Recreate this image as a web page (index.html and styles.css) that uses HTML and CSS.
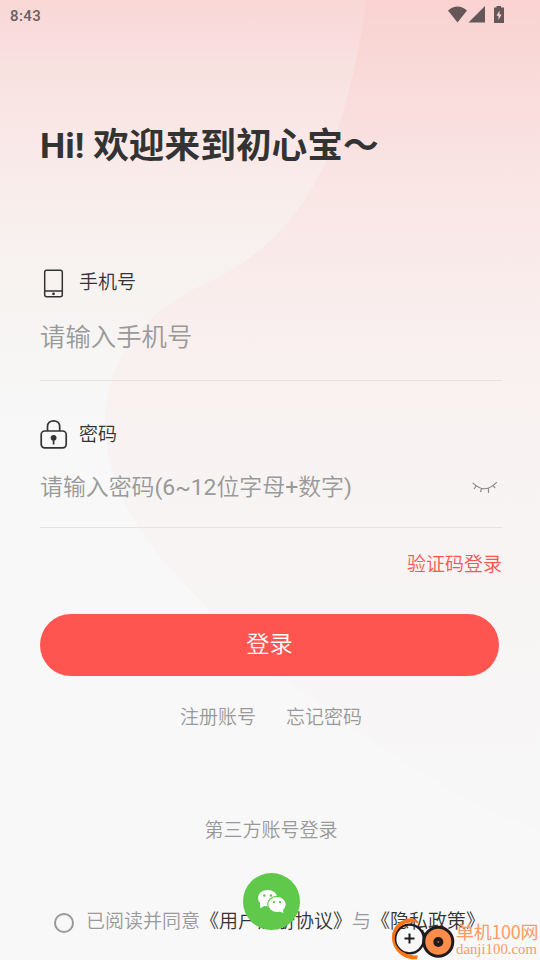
FILE: index.html
```html
<!DOCTYPE html>
<html lang="zh-CN">
<head>
<meta charset="utf-8">
<title>登录</title>
<link rel="stylesheet" href="styles.css">
</head>
<body>
<div class="screen">
  <svg class="backdrop" viewBox="0 0 540 960" aria-hidden="true">
    <defs>
      <linearGradient id="blob" gradientUnits="userSpaceOnUse" x1="0" y1="0" x2="0" y2="860">
        <stop offset="0" stop-color="#fad2d1"/>
        <stop offset=".05" stop-color="#f8d7d5"/>
        <stop offset=".12" stop-color="#fadddd"/>
        <stop offset=".22" stop-color="#f9e6e5"/>
        <stop offset=".36" stop-color="#f9eeed"/>
        <stop offset=".5" stop-color="#f8f3f2"/>
        <stop offset=".7" stop-color="#f7f5f4"/>
        <stop offset="1" stop-color="#f8f7f8"/>
      </linearGradient>
    </defs>
    <path fill="url(#blob)" d="M366 0C360 50 347 112 324 165C301 214 270 249 221 276C185 292 153 311 138 334C117 356 105 390 105 422C106 470 123 508 155 551C196 600 245 645 296 686C365 739 440 793 540 832V0Z"/>
  </svg>

  <header class="status">
    <span>8:43</span>
    <svg class="status-icons" viewBox="0 0 58 18" fill="#655757">
      <path d="M0 4.500Q9.500-3.500 19 4.500L9.500 16.500Z"/>
      <path d="M20.500 16.500L37 0V16.500Z"/>
      <path d="M46 1.500H48.500V0H53V1.500H56V17H46Z"/>
      <path fill="#f8d5d3" d="M51.500 4.500L48.500 9.800H50.500V14L53.500 8.500H51.500Z"/>
    </svg>
  </header>

  <main class="content">
    <h1>Hi! 欢迎来到初心宝～</h1>

    <section class="field phone">
      <div class="label">
        <svg class="icon" viewBox="0 0 28 32" fill="none" stroke="#333" stroke-width="1.500">
          <rect x="4.700" y="2.300" width="17.600" height="26.400" rx="2"/>
          <path d="M4.700 23H22.300"/>
          <circle cx="13.500" cy="25.800" r="1.400" fill="#333" stroke="none"/>
        </svg>
        <span>手机号</span>
      </div>
      <div class="entry">请输入手机号</div>
    </section>

    <section class="field password">
      <div class="label">
        <svg class="icon" viewBox="0 1 28 32" fill="none" stroke="#333" stroke-width="1.700">
          <rect x="1.200" y="13" width="25" height="16.800" rx="3.500"/>
          <path d="M7.500 13V8.500C7.500 0.900 19.700 0.900 19.700 8.500V13"/>
          <circle cx="13.600" cy="19.800" r="2.900" fill="#333" stroke="none"/>
          <path d="M13.600 20V26.500"/>
        </svg>
        <span>密码</span>
      </div>
      <div class="entry">
        <span>请输入密码<i>(6~12</i>位字母<i>+</i>数字<i>)</i></span>
        <svg class="eye" viewBox="0 0 26 14" fill="none" stroke="#8c8989" stroke-width="1.200">
          <path d="M.8 1.800Q12.800 14 24.800 1.200M4.200 5L2 8M9.500 7.600L8.500 11.200M16.500 7.600V12M21 4.700L23.200 7"/>
        </svg>
      </div>
    </section>

    <a class="code-login">验证码登录</a>
    <div class="submit">登录</div>
    <nav class="links"><a>注册账号</a><a>忘记密码</a></nav>
    <p class="third">第三方账号登录</p>
    <div class="agreement">
      <span class="radio"></span>
      <p>已阅读并同意<b>《用户注册协议》</b>与<b>《隐私政策》</b></p>
    </div>
  </main>

  <svg class="wechat" viewBox="0 0 57 57">
    <circle cx="28.500" cy="28.500" r="28.500" fill="#60c84b"/>
    <g fill="#fff">
      <ellipse cx="24.600" cy="25.200" rx="9.700" ry="8.300"/>
      <path d="M17 30L17.200 35.300L23 32Z"/>
      <ellipse cx="34" cy="31.500" rx="9.300" ry="8.100" stroke="#60c84b" stroke-width="1.200"/>
      <path d="M36 38L40.300 40L40 35Z"/>
    </g>
    <g fill="#60c84b">
      <circle cx="21.300" cy="22.500" r="1.300"/><circle cx="28" cy="22.500" r="1.300"/>
      <circle cx="31" cy="29.200" r="1.100"/><circle cx="37" cy="29.200" r="1.100"/>
    </g>
  </svg>

  <aside class="watermark">
    <svg viewBox="0 0 64 42" fill="none">
      <circle cx="18.500" cy="21" r="14.300" stroke="#211b1d" stroke-width="2.300"/>
      <path d="M20 .3C8 1 0 11 1 21C2 33 14 43 26 41L27 37.500C15 38 4 31 3.700 21C3.500 13 10 5 20 4.500Q24 4 28 5Q26 1 20 .3Z" fill="#ff7412"/>
      <path d="M13.500 20.500H23.500M18.500 15.500V25.500" stroke="#211b1d" stroke-width="2"/>
      <path d="M31 12Q32 18 37 15M34.500 18L40 11.500" stroke="#211b1d" stroke-width="2.300"/>
      <circle cx="47.300" cy="23.700" r="14.500" fill="#ff8c48" stroke="#211b1d" stroke-width="3"/>
      <circle cx="47.300" cy="24" r="5" fill="#211b1d"/>
      <circle cx="47.300" cy="24" r=".8" fill="#ff8c48"/>
    </svg>
    <div class="mark-text"><span>单机100网</span><span class="domain">danji100.com</span></div>
  </aside>
</div>
</body>
</html>
```

FILE: styles.css
```css
* { box-sizing: border-box; }
body, h1, p { margin: 0; }
body {
  width: 540px;
  height: 960px;
  overflow: hidden;
  font-family: Roboto, "Noto Sans CJK SC", sans-serif;
  font-size: 19px;
  font-weight: 350;
  color: #333;
}
.screen {
  position: relative;
  height: 960px;
  background: linear-gradient(#f9d8d5 0, #fadcde 40px, #f8e2e0 70px, #f9e7e6 125px, #f9edeb 190px, #f7f2f0 270px, #f7f5f4 340px, #f8f8f8 430px);
}
.backdrop { position: absolute; inset: 0; width: 540px; height: 960px; }
.status {
  position: relative;
  display: flex;
  justify-content: space-between;
  height: 32px;
  padding: 6px 34px 0 10px;
  font-size: 15px;
  font-weight: 500;
  line-height: 20px;
  letter-spacing: .4px;
  color: #6b5d5d;
}
.status-icons { width: 58px; height: 18px; }
.content {
  position: relative;
  display: flex;
  flex-direction: column;
  padding: 86px 38px 0 40px;
}
h1 { height: 56px; font-size: 35.700px; line-height: 56px; white-space: nowrap; }
.field { border-bottom: 1px solid #e6e2e2; }
.phone { height: 113px; margin-top: 94px; }
.password { height: 109px; margin-top: 38px; }
.label { display: flex; align-items: center; height: 32px; gap: 11px; }
.label span { line-height: 28px; margin-bottom: 3px; }
.icon { width: 28px; height: 32px; }
.entry {
  display: flex;
  align-items: center;
  justify-content: space-between;
  color: #999;
}
.entry i { font-style: normal; font-weight: 400; }
.phone .entry { height: 38px; margin-top: 16px; font-size: 25.400px; }
.password .entry { height: 36px; margin-top: 16px; padding-right: 4px; font-size: 22.900px; }
.password .label span { margin-bottom: 1px; }
.eye { width: 26px; height: 14px; margin-top: 6px; }
.code-login { align-self: flex-end; margin-top: 23px; line-height: 28px; color: #ff5550; }
.submit {
  width: 459px;
  height: 62px;
  margin-top: 35px;
  border-radius: 31px;
  background: #ff5550;
  color: #fff;
  font-size: 23.200px;
  line-height: 61px;
  text-align: center;
}
.links { display: flex; justify-content: center; gap: 30px; margin-top: 28px; line-height: 28px; color: #999; }
.third { margin-top: 85px; line-height: 28px; text-align: center; color: #999; }
.agreement { display: flex; align-items: center; gap: 12px; margin: 63px 0 0 14px; color: #999; white-space: nowrap; line-height: 28px; }
.agreement b { color: #333; font-weight: 350; }
.radio { width: 20px; height: 20px; margin-top: 1px; border: 2px solid #999; border-radius: 50%; }
.wechat { position: absolute; left: 243px; top: 873px; width: 57px; height: 57px; }
.watermark { position: absolute; left: 391px; top: 918px; display: flex; gap: 1px; font-weight: 400; color: #ff9a61; }
.watermark svg { width: 64px; height: 42px; }
.mark-text { display: flex; flex-direction: column; padding-top: 1px; font-family: "Noto Sans CJK SC", sans-serif; font-size: 18px; line-height: 24px; letter-spacing: -.3px; white-space: nowrap; }
.domain { font-family: "Liberation Serif", serif; font-size: 14.800px; line-height: 13px; letter-spacing: 0; }
```
